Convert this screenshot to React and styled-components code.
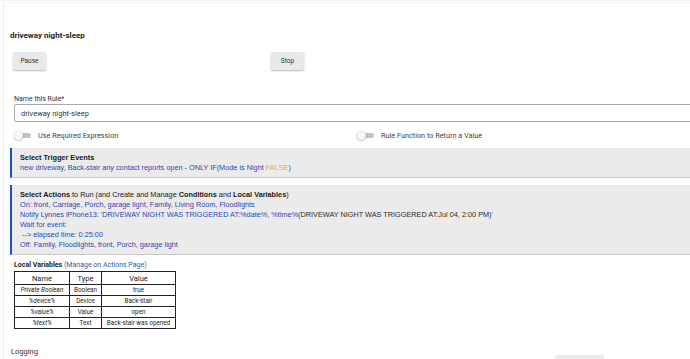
import React from 'react'
import styled, { createGlobalStyle } from 'styled-components'

const GlobalStyle = createGlobalStyle`
  html, body {
    margin: 0;
    padding: 0;
    background: #fff;
    overflow: hidden;
  }
`

const variables = [
  { name: 'Private Boolean', type: 'Boolean', value: 'true' },
  { name: '%device%', type: 'Device', value: 'Back-stair' },
  { name: '%value%', type: 'Value', value: 'open' },
  { name: '%text%', type: 'Text', value: 'Back-stair was opened' },
]

function Toggle({ label }) {
  return (
    <ToggleRow>
      <Switch />
      <span>{label}</span>
    </ToggleRow>
  )
}

function App() {
  return (
    <Page>
      <GlobalStyle />
      <Card>
        <Title>driveway night-sleep</Title>

        <ButtonRow>
          <ButtonCell>
            <Button>Pause</Button>
          </ButtonCell>
          <ButtonCell>
            <Button>Stop</Button>
          </ButtonCell>
        </ButtonRow>

        <Field>
          <Label>Name this Rule*</Label>
          <Input>driveway night-sleep</Input>
        </Field>

        <ToggleGrid>
          <Toggle label="Use Required Expression" />
          <Toggle label="Rule Function to Return a Value" />
        </ToggleGrid>

        <Section $gap={4}>
          <Heading><b>Select Trigger Events</b></Heading>
          <Line>
            new driveway, Back-stair any contact reports open - ONLY IF(Mode is Night <Orange>FALSE</Orange>)
          </Line>
        </Section>

        <Section $gap={7}>
          <Heading>
            <b>Select Actions</b> to Run (and Create and Manage <b>Conditions</b> and <b>Local Variables</b>)
          </Heading>
          <Line>On: front, Carriage, Porch, garage light, Family, Living Room, Floodlights</Line>
          <Line>
            Notify Lynnes iPhone13: 'DRIVEWAY NIGHT WAS TRIGGERED AT:%date%, %time%
            <Dark>(DRIVEWAY NIGHT WAS TRIGGERED AT:Jul 04, 2:00 PM)</Dark>'
          </Line>
          <Line>Wait for event:</Line>
          <Line>&nbsp;--&gt; elapsed time: 0:25:00</Line>
          <Line>Off: Family, Floodlights, front, Porch, garage light</Line>
        </Section>

        <VarsBlock>
          <VarsTitle>
            <b>Local Variables</b> <Link>(Manage on Actions Page)</Link>
          </VarsTitle>
          <Table>
            <thead>
              <tr>
                <Th $w={54}>Name</Th>
                <Th $w={31}>Type</Th>
                <Th>Value</Th>
              </tr>
            </thead>
            <tbody>
              {variables.map((v) => (
                <tr key={v.name}>
                  <Td $italic>{v.name}</Td>
                  <Td>{v.type}</Td>
                  <Td>{v.value}</Td>
                </tr>
              ))}
            </tbody>
          </Table>
        </VarsBlock>

        <Footer>
          <span>Logging</span>
          <GhostButton />
        </Footer>
      </Card>
    </Page>
  )
}

export default App

const Page = styled.div`
  width: 690px;
  height: 359px;
  overflow: hidden;
  padding: 1px 0 0 3px;
  box-sizing: border-box;
  background: #fff;
  border-top: 1px solid #f1f1f1;
  font-family: Roboto, 'Liberation Sans', sans-serif;
  color: #222;
`

const Card = styled.div`
  width: 760px;
  min-height: 400px;
  border-left: 1px solid #ececec;
  border-top: 1px solid #f3f3f3;
  padding: 28px 0 0 6px;
  box-sizing: border-box;
`

const Title = styled.div`
  font-size: 8px;
  font-weight: 700;
  color: #1d1d1d;
  line-height: 10px;
`

const ButtonRow = styled.div`
  display: flex;
  margin-top: 7px;
  padding-left: 3px;
`

const ButtonCell = styled.div`
  width: 258px;
`

const Button = styled.button`
  width: 33px;
  height: 18px;
  padding: 0;
  border: none;
  border-radius: 2px;
  background: #e9e9e9;
  box-shadow: 0 1px 2px rgba(0, 0, 0, 0.28);
  font-family: Roboto, sans-serif;
  font-size: 6.5px;
  color: #333;
`

const Field = styled.div`
  margin-top: 25px;
  padding-left: 4px;
`

const Label = styled.div`
  font-size: 7px;
  line-height: 9px;
  color: #333;
`

const Input = styled.div`
  height: 18px;
  border: 1px solid #a8a8a8;
  border-radius: 2px;
  box-sizing: border-box;
  padding-left: 6px;
  display: flex;
  align-items: center;
  font-size: 7.5px;
  color: #333;
`

const ToggleGrid = styled.div`
  display: grid;
  grid-template-columns: 343px 1fr;
  padding-left: 4px;
  margin-top: 4px;
  height: 18px;
  align-items: center;
`

const ToggleRow = styled.div`
  display: flex;
  align-items: center;
  gap: 7px;
  font-size: 7.3px;
  color: #444;
`

const Switch = styled.span`
  position: relative;
  width: 17px;
  height: 5px;
  border-radius: 3px;
  background: #c4c4c4;

  &::before {
    content: '';
    position: absolute;
    left: 0;
    top: -2px;
    width: 9px;
    height: 9px;
    border-radius: 50%;
    background: #f7f7f7;
    box-shadow: 0 0.5px 2px rgba(0, 0, 0, 0.35);
  }
`

const Section = styled.div`
  margin-top: ${(p) => p.$gap || 5}px;
  background: #ebebeb;
  border-left: 2px solid #1b56b4;
  border-bottom: 1px solid #c9c9c9;
  padding: 5px 0 4px 8px;
  font-family: 'Liberation Sans', Arial, sans-serif;
  font-size: 7.3px;
  line-height: 10px;
`

const Heading = styled.div`
  color: #1a1a1a;

  b {
    font-weight: 700;
  }
`

const Line = styled.div`
  color: #2f47b5;
  white-space: pre;
`

const Orange = styled.span`
  color: #f3a73c;
`

const Dark = styled.span`
  color: #2b2b2b;
`

const VarsBlock = styled.div`
  margin-top: 6px;
  padding-left: 4px;
`

const VarsTitle = styled.div`
  font-size: 7px;
  line-height: 9px;
  color: #1e1e1e;
`

const Link = styled.span`
  color: #2f5aa6;
`

const Table = styled.table`
  border-collapse: collapse;
  width: 162px;
  margin-top: 1px;
  font-size: 6.3px;
  color: #222;

  th,
  td {
    border: 1px solid #222;
    text-align: center;
    padding: 0;
  }
`

const Th = styled.th`
  width: ${(p) => (p.$w ? `${p.$w}px` : 'auto')};
  height: 12px;
  font-weight: 400;
  font-size: 7.5px;
`

const Td = styled.td`
  height: 10px;
  font-style: ${(p) => (p.$italic ? 'italic' : 'normal')};
`

const Footer = styled.div`
  display: flex;
  align-items: flex-start;
  margin-top: 17px;
  padding-left: 1px;
  font-size: 7.5px;
  color: #333;
  height: 20px;

  span {
    margin-top: 1px;
  }
`

const GhostButton = styled.div`
  margin-left: 517px;
  margin-top: 9px;
  width: 49px;
  height: 14px;
  background: #ececec;
  border-radius: 2px;
`
